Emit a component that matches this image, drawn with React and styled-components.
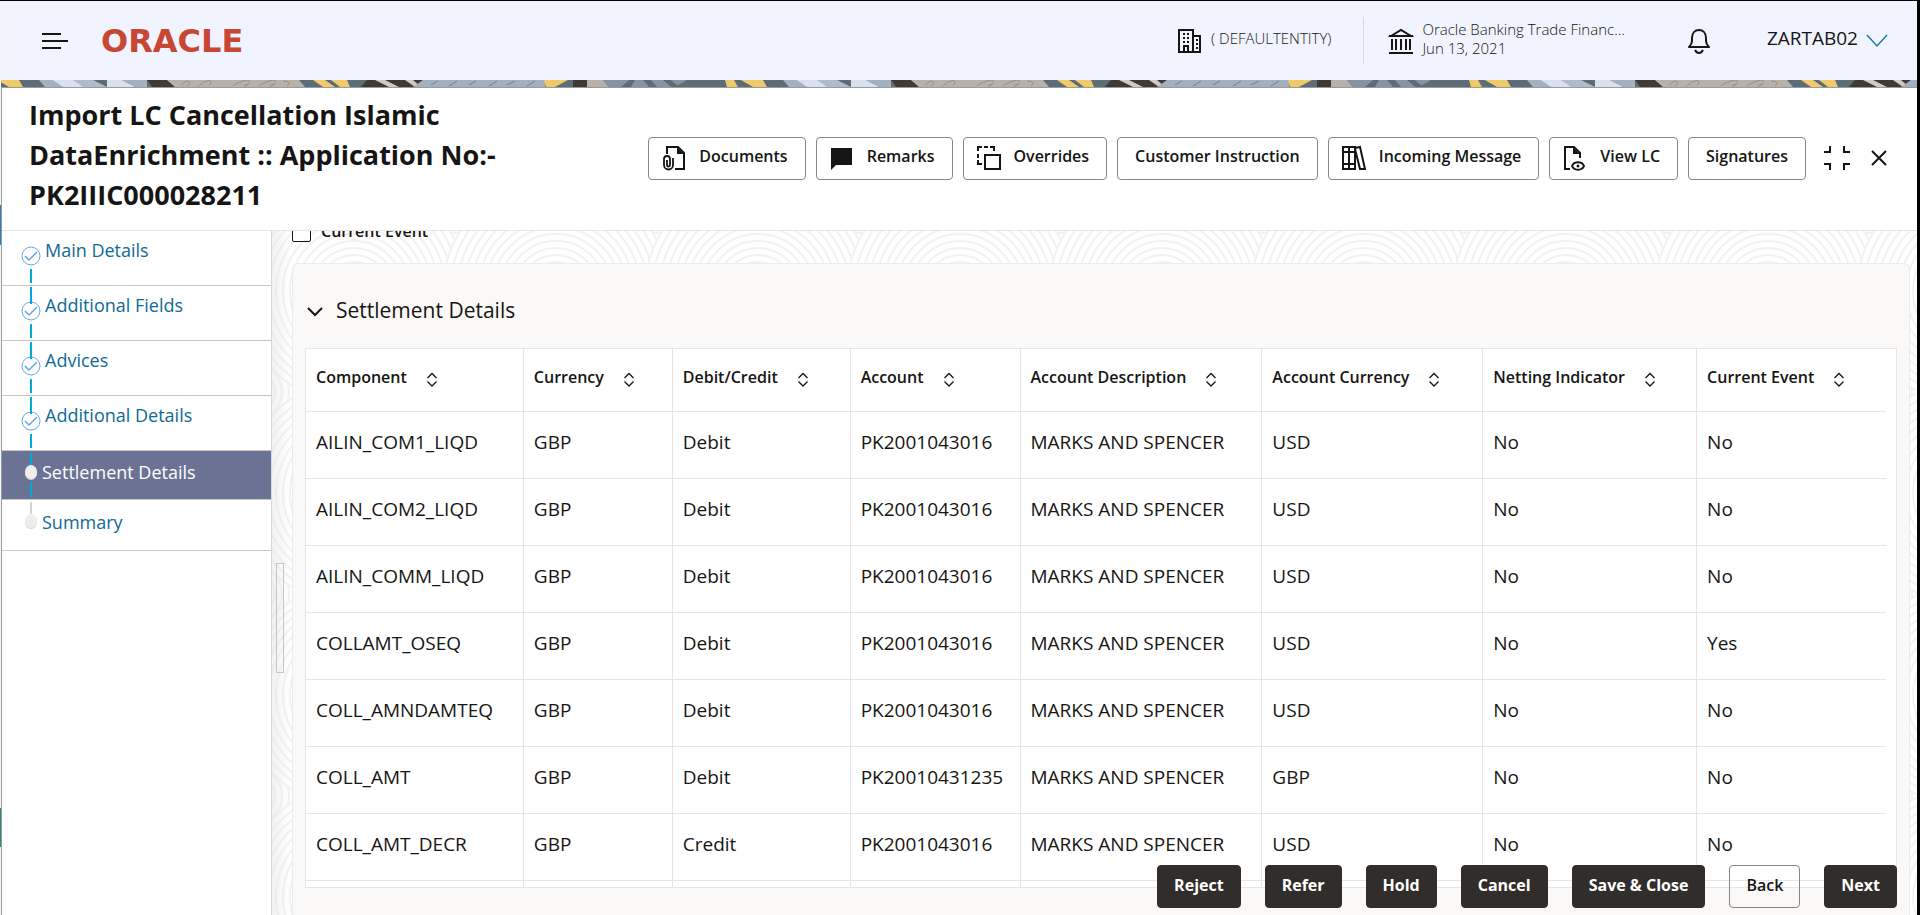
import styled, { createGlobalStyle } from "styled-components"

const GlobalStyle = createGlobalStyle`
    :root {
        --text-color: #161513;
        --link-color: #0f6a94;
        --line-color: #e5e5e5;
        --topbar-color: #f1f4fe;
        --active-color: #6b7394;
        --dark-button-color: #312d2a;
        --small-font-size: 15px;
        --button-font-size: 16px;
        --menu-font-size: 18px;
        --body-font-size: 19px;
    }

    * {
        box-sizing: border-box;
    }

    body {
        margin: 0;
        color: var(--text-color);
        font-family: "Open Sans", "Noto Sans", sans-serif;
        font-size: var(--body-font-size);
    }

    button, input {
        font-family: inherit;
        color: inherit;
    }

    svg {
        display: block;
        flex: none;
    }
`

const ringRadii = [113, 106, 99, 92, 85, 78, 71, 64, 57, 50, 43, 36, 29, 22, 15, 8]

/* the later rings cover the earlier ones */
const ringCenters = [
    [101, 101], [-101, 101], [303, 101], [101, -101], [101, 303],
    [0, 0], [202, 0], [0, 202], [202, 202],
]

const ringsAt = (x, y) => ringRadii.map((r) => `<circle cx="${x}" cy="${y}" r="${r}"/>`).join("")

const ringTile = `<svg xmlns="http://www.w3.org/2000/svg" width="202" height="202"><g fill="#fff" stroke="#f2f2f2" stroke-width="2">${
    ringCenters.map(([x, y]) => ringsAt(x, y)).join("")
}</g></svg>`

const Window = styled.div`
    display: flex;
    flex-direction: column;
    height: 100vh;
    overflow: hidden;
    padding-left: 1px;
    border-top: 1px solid #000;
    border-right: 3px solid #000;
    background: linear-gradient(#f4f6f8 204px, #2f7fb8 204px, #2f7fb8 244px, #f4f6f8 244px, #f4f6f8 807px, #2c8a80 807px, #2c8a80 846px, #f4f6f8 846px);
`

const TopBar = styled.header`
    display: flex;
    align-items: center;
    height: 79px;
    padding: 0 29px 0 40px;
    background: var(--topbar-color);
    font-size: var(--small-font-size);
    font-weight: 300;
`

const IconButton = styled.button`
    display: flex;
    align-items: center;
    padding: 0;
    border: none;
    background: transparent;
    cursor: pointer;
`

const Logo = styled.a`
    margin: 0 auto 0 32px;
    color: #c74634;
    font-family: "DejaVu Sans", sans-serif;
    font-size: 32px;
    font-weight: 700;
    line-height: 32px;
    text-decoration: none;
`

const BarText = styled.div`
    padding-bottom: 4px;
    line-height: 19px;
`

const Entity = styled.div`
    display: flex;
    align-items: center;
    gap: 8px;
    height: 47px;
    padding-right: 32px;
    border-right: 1px solid #d5d9e4;
`

const Branch = styled.div`
    display: flex;
    align-items: center;
    gap: 8px;
    padding-left: 24px;
    margin-right: 62px;
`

const UserMenu = styled(IconButton)`
    gap: 8px;
    margin-left: 56px;
    font-size: var(--body-font-size);
`

const Page = styled.div`
    flex: 1;
    display: flex;
    flex-direction: column;
    min-height: 0;
    border-left: 1px solid #9a9a9a;
    background: #fff;
`

const TitleBar = styled.div`
    display: flex;
    align-items: center;
    justify-content: space-between;
    gap: 20px;
    padding: 7px 30px 15px 27px;
    border-top: 1px solid #9a9a9a;
    border-bottom: 1px solid var(--line-color);
`

const Title = styled.h1`
    flex: 0 1 500px;
    margin: 0;
    font-size: 27px;
    font-weight: 700;
    line-height: 40px;
`

const Toolbar = styled.div`
    display: flex;
    align-items: center;
    gap: 10px;
    padding-top: 6px;
`

const ToolButton = styled.button`
    display: flex;
    align-items: center;
    gap: ${(props) => (props.$tight ? 12 : 14)}px;
    height: 43px;
    padding: 0 17px 0 ${(props) => (props.$icon ? 12 : 17)}px;
    border: 1px solid #8b8580;
    border-radius: 4px;
    background: transparent;
    font-size: var(--button-font-size);
    font-weight: 600;
    line-height: 22px;
    white-space: nowrap;
    cursor: pointer;

    span {
        padding-bottom: 4px;
    }
`

const WindowButtons = styled.div`
    display: flex;
    align-items: center;
    gap: 20px;
    padding-left: 7px;
`

const Body = styled.div`
    flex: 1;
    display: flex;
    min-height: 0;
`

const Steps = styled.nav`
    flex: none;
    width: 270px;
    border-right: 1px solid #d3dae3;
`

const stepHeights = { done: 55, active: 49, next: 51 }
const stepLines = { done: 38, active: 42, next: 44 }

const Step = styled.a`
    display: flex;
    height: ${(props) => stepHeights[props.$state]}px;
    padding-left: 18px;
    gap: ${(props) => (props.$state === "done" ? 3 : 0)}px;
    border-bottom: 1px solid #c9c7c3;
    background: ${(props) => (props.$state === "active" ? "var(--active-color)" : "transparent")};
    color: ${(props) => (props.$state === "active" ? "#fff" : "var(--link-color)")};
    font-size: var(--menu-font-size);
    line-height: ${(props) => stepLines[props.$state]}px;
    text-decoration: none;
`

const Main = styled.main`
    flex: 1;
    display: flex;
    min-width: 0;
    overflow: hidden;
    background: linear-gradient(to right, rgba(225, 228, 232, 0.5), transparent 18px),
        url("data:image/svg+xml,${encodeURIComponent(ringTile)}") 82px 60px;
`

const Gutter = styled.div`
    flex: none;
    width: 20px;
    padding: 332px 0 0 4px;
`

const Splitter = styled.div`
    width: 8px;
    height: 110px;
    border: 1px solid #c6c6c6;
`

/* scrolled a little, so that the checkbox row runs under the title bar */
const Content = styled.div`
    flex: 1;
    display: flex;
    flex-direction: column;
    min-width: 0;
    margin: -16px 7px 0 0;
`

const CheckLabel = styled.label`
    flex: none;
    display: flex;
    align-items: center;
    gap: 10px;
    height: 34px;
    margin-bottom: 14px;
    font-size: var(--button-font-size);
    font-weight: 600;
    line-height: 20px;

    span {
        padding-bottom: 2px;
    }
`

const Checkbox = styled.input`
    appearance: none;
    width: 19px;
    height: 19px;
    margin: 0;
    border: 1px solid var(--text-color);
    border-radius: 2px;
    background: #fff;
`

const Card = styled.section`
    flex: 1;
    padding: 0 12px;
    border: 1px solid #eeecea;
    border-bottom: none;
    border-radius: 6px 6px 0 0;
    background: #faf9f7;
`

const CardTitle = styled.h2`
    margin: 0;
    padding: 32px 0 24px;
    font-size: 21px;
    font-weight: 500;
    line-height: 28px;

    button {
        gap: 11px;
        font-size: inherit;
        font-weight: inherit;
        line-height: inherit;
    }
`

const TableBox = styled.div`
    padding-right: 10px;
    border: 1px solid var(--line-color);
    background: #fff;
`

const Table = styled.table`
    width: 100%;
    table-layout: fixed;
    border-collapse: separate;
    border-spacing: 0;
`

const HeadCell = styled.th`
    height: 63px;
    padding: 0 0 2px 10px;
    border-bottom: 1px solid var(--line-color);
    border-right: 1px solid var(--line-color);
    font-size: var(--button-font-size);
    font-weight: 600;
    line-height: 22px;
    text-align: left;
    white-space: nowrap;

    &:last-child {
        border-right: none;
    }
`

const SortButton = styled(IconButton)`
    gap: 18px;
    font-size: inherit;
    font-weight: inherit;
    line-height: inherit;

    span {
        padding-bottom: 4px;
    }
`

const Cell = styled.td`
    height: ${(props) => (props.$peek ? 6 : 67)}px;
    padding: 0 0 ${(props) => (props.$peek ? 0 : 6)}px 10px;
    border-bottom: ${(props) => (props.$peek ? "none" : "1px solid var(--line-color)")};
    border-right: 1px solid var(--line-color);
    line-height: 24px;
    white-space: nowrap;

    &:last-child {
        border-right: none;
    }
`

const ActionBar = styled.footer`
    position: absolute;
    right: 23px;
    bottom: 7px;
    display: flex;
    gap: 24px;
`

const ActionButton = styled.button`
    height: 43px;
    padding: 0 16px 4px;
    border: 1px solid ${(props) => (props.$outlined ? "#8b8580" : "var(--dark-button-color)")};
    border-radius: 4px;
    background: ${(props) => (props.$outlined ? "transparent" : "var(--dark-button-color)")};
    color: ${(props) => (props.$outlined ? "var(--text-color)" : "#fff")};
    font-size: var(--button-font-size);
    font-weight: ${(props) => (props.$outlined ? 600 : 700)};
    line-height: 22px;
    cursor: pointer;
`

const MenuIcon = () => (
    <svg width="28" height="20" viewBox="0 0 28 20" stroke="#161513" strokeWidth="2">
        <path d="M1 3h19M1 10h26M1 17h19" />
    </svg>
)

const BuildingIcon = () => (
    <svg width="26" height="26" viewBox="0 0 26 26" fill="none" stroke="#161513" strokeWidth="2">
        <path d="M2 2h14v22H2zM16 8h7v16h-7M7 24v-6h4v6" />
        <path d="M6 6h2M10 6h2M6 10h2M10 10h2M6 14h2M10 14h2M19 12h2M19 16h2M19 20h2" />
    </svg>
)

const BankIcon = () => (
    <svg width="26" height="28" viewBox="0 0 26 28" fill="none" stroke="#161513" strokeWidth="2">
        <path d="M3 9L13 3l10 6z" />
        <path d="M1 9h24M4 12v11M8 12v11M13 12v11M18 12v11M22 12v11M1 26h24" />
    </svg>
)

const BellIcon = () => (
    <svg width="24" height="26" viewBox="0 0 24 26" fill="none" stroke="#161513" strokeWidth="2">
        <path d="M2 19c2-2 3-3 3-6v-3c0-5 3-8 7-8s7 3 7 8v3c0 3 1 4 3 6z" strokeLinejoin="round" />
        <path d="M8 22c1 2 2 3 4 3s3-1 4-3" />
    </svg>
)

const UserChevron = () => (
    <svg width="22" height="14" viewBox="0 0 22 14" fill="none" stroke="#1c7aa8" strokeWidth="1.5">
        <path d="M1 1l10 11L21 1" />
    </svg>
)

const DocumentsIcon = () => (
    <svg width="24" height="26" viewBox="0 0 24 26" fill="none" stroke="#161513" strokeWidth="2">
        <path d="M6 9V2h11l6 6v16h-9" />
        <path d="M16 2v7h7z" fill="#161513" stroke="none" />
        <path d="M12 13v7a4.500 4.500 0 0 1-9 0v-6a3 3 0 0 1 6 0v6a1.500 1.500 0 0 1-3 0v-5" strokeWidth="1.800" />
    </svg>
)

const RemarksIcon = () => (
    <svg width="24" height="26" viewBox="0 0 24 26" fill="#161513">
        <path d="M2 3h21v17H7l-5 5z" />
    </svg>
)

const OverridesIcon = () => (
    <svg width="26" height="26" viewBox="0 0 26 26" fill="none" stroke="#161513" strokeWidth="2">
        <path d="M9 10h15v14H9z" />
        <path d="M2 6V2h4M8 2h4M14 2h4v4M2 9v4M2 15v4h4" />
    </svg>
)

const BooksIcon = () => (
    <svg width="26" height="26" viewBox="0 0 26 26" fill="none" stroke="#161513" strokeWidth="2">
        <path d="M2 2h6v22H2zM8 2h6v22H8zM2 7h12M2 19h12" />
        <path d="M14 3l5-1 5 22h-5L14 4" />
    </svg>
)

const ViewDocIcon = () => (
    <svg width="24" height="26" viewBox="0 0 24 26" fill="none" stroke="#161513" strokeWidth="2">
        <path d="M8 24H3V2h9l6 6v5" />
        <path d="M11 2v7h7z" fill="#161513" stroke="none" />
        <path d="M10 21c2-5 10-5 12 0-2 5-10 5-12 0z" />
        <circle cx="16" cy="21" r="1.500" fill="#161513" stroke="none" />
    </svg>
)

const CollapseIcon = () => (
    <svg width="28" height="28" viewBox="0 0 28 28" fill="none" stroke="#161513" strokeWidth="2">
        <path d="M1 8h6V2M27 8h-6V2M1 20h6v6M27 20h-6v6" />
    </svg>
)

const CloseIcon = () => (
    <svg width="16" height="16" viewBox="0 0 16 16" fill="none" stroke="#161513" strokeWidth="2">
        <path d="M1 1l14 14M15 1L1 15" />
    </svg>
)

const CardChevron = () => (
    <svg width="20" height="20" viewBox="0 0 20 20" fill="none" stroke="#161513" strokeWidth="2">
        <path d="M3 8l7 7 7-7" />
    </svg>
)

const SortIcon = () => (
    <svg width="14" height="18" viewBox="0 0 14 18" fill="none" stroke="#161513" strokeWidth="1.300">
        <path d="M2.500 8L7 3.500 11.500 8M2.500 11.500L7 16l4.500-4.500" />
    </svg>
)

const StepMark = ({ state, first }) => {
    if (state === "done") {
        return (
            <svg width="22" height="54" viewBox="0 0 22 54" fill="none">
                <circle cx="11" cy="25" r="9" stroke="#6aa5e3" />
                <path d="M5 25l4 4 8-8" stroke="#6aa5e3" strokeWidth="1.500" />
                {!first && <path d="M11 1v17" stroke="#00abdb" strokeWidth="2" />}
                <path d="M11 38v14" stroke="#00abdb" strokeWidth="2" />
            </svg>
        )
    }

    return (
        <svg width="22" height="48" viewBox="0 0 22 48" fill="none">
            <path d="M11 2v12" stroke={state === "active" ? "#00abdb" : "#d4d4d4"} strokeWidth="2" />
            {state === "active" && <path d="M11 31v15" stroke="#00abdb" strokeWidth="2" />}
            <ellipse cx="11" cy="22" rx="6" ry="7" fill="#d8d7d5" />
            <ellipse cx="11" cy="21" rx="6" ry="7" fill="#efeeec" />
        </svg>
    )
}

/* woven band under the top bar, repeats every 744px */
const Band = () => (
    <svg width="100%" height="7">
        <defs>
            <pattern id="band" x="146" width="744" height="7" patternUnits="userSpaceOnUse">
                <rect width="744" height="7" fill="#5c6d78" />
                <path d="M0 0h20l8 7H5z" fill="#403a36" />
                <path d="M20 0h132l6 7H28z" fill="#b8b0aa" />
                <path d="M34 5c6-6 12-4 6 1M52 6c8-8 16-6 10-1M86 6c8-6 20-8 16-3s-8 3 0 1M112 6c8-6 20-8 16-3s-8 3 0 1M136 1c6 0 8 2 4 5" fill="none" stroke="#948c86" />
                <path d="M166 0h12l10 7h-12zM184 0h16l3 7h-10z" fill="#efc96a" />
                <path d="M220 0h56l-8 7h-54z" fill="#403a36" />
                <path d="M228 0h10l14 7h-10zM258 0h8l8 7h-6z" fill="#cfcac5" />
                <path d="M276 0h122v7H266z" fill="#a3b0c2" />
                <path d="M284 5l7-4M302 6l8-5M322 5l7-4M342 6l8-5M360 5l8-4M380 6l8-5" stroke="#71808f" />
                <path d="M397 0h24l-13 7h-9z" fill="#efc96a" />
                <path d="M426 0h14v7h-14z" fill="#403a36" />
                <path d="M440 0h16l6 7h-22z" fill="#b8b0aa" />
                <path d="M456 0h84l-12 7h-66z" fill="#8593a5" />
                <path d="M474 7l8-7h6l-4 7zM496 0h8l6 7h-8zM516 0h8l8 7h-8z" fill="#5c6d78" />
                <path d="M578 0h9l4 7h-11zM594 0h22l4 7h-14z" fill="#efc96a" />
                <path d="M636 0h16l10 7h-20z" fill="#a3b0c2" />
                <path d="M650 0h20l14 7h-24z" fill="#d9e1f1" />
                <path d="M670 0h20l14 7h-24z" fill="#b0bccd" />
                <path d="M704 0h18l10 7h-28z" fill="#d9e1f1" />
                <path d="M718 0h26v7h-12z" fill="#a3b0c2" />
            </pattern>
        </defs>
        <rect width="100%" height="7" fill="url(#band)" />
    </svg>
)

const tools = [
    { label: "Documents", icon: <DocumentsIcon /> },
    { label: "Remarks", icon: <RemarksIcon /> },
    { label: "Overrides", icon: <OverridesIcon />, tight: true },
    { label: "Customer Instruction" },
    { label: "Incoming Message", icon: <BooksIcon />, tight: true },
    { label: "View LC", icon: <ViewDocIcon /> },
    { label: "Signatures" },
]

const steps = [
    { label: "Main Details", state: "done" },
    { label: "Additional Fields", state: "done" },
    { label: "Advices", state: "done" },
    { label: "Additional Details", state: "done" },
    { label: "Settlement Details", state: "active" },
    { label: "Summary", state: "next" },
]

const columns = [
    { label: "Component", width: 218 },
    { label: "Currency", width: 149 },
    { label: "Debit/Credit", width: 178 },
    { label: "Account", width: 170 },
    { label: "Account Description", width: 242 },
    { label: "Account Currency", width: 221 },
    { label: "Netting Indicator", width: 214 },
    { label: "Current Event", width: 189 },
]

const tableWidth = columns.reduce((sum, column) => sum + column.width, 0)

const rows = [
    ["AILIN_COM1_LIQD", "GBP", "Debit", "PK2001043016", "MARKS AND SPENCER", "USD", "No", "No"],
    ["AILIN_COM2_LIQD", "GBP", "Debit", "PK2001043016", "MARKS AND SPENCER", "USD", "No", "No"],
    ["AILIN_COMM_LIQD", "GBP", "Debit", "PK2001043016", "MARKS AND SPENCER", "USD", "No", "No"],
    ["COLLAMT_OSEQ", "GBP", "Debit", "PK2001043016", "MARKS AND SPENCER", "USD", "No", "Yes"],
    ["COLL_AMNDAMTEQ", "GBP", "Debit", "PK2001043016", "MARKS AND SPENCER", "USD", "No", "No"],
    ["COLL_AMT", "GBP", "Debit", "PK20010431235", "MARKS AND SPENCER", "GBP", "No", "No"],
    ["COLL_AMT_DECR", "GBP", "Credit", "PK2001043016", "MARKS AND SPENCER", "USD", "No", "No"],
]

const actions = ["Reject", "Refer", "Hold", "Cancel", "Save & Close", "Back", "Next"]

const Header = () => (
    <TopBar>
        <IconButton aria-label="Menu"><MenuIcon /></IconButton>
        <Logo href="#">ORACLE</Logo>
        <Entity>
            <BuildingIcon />
            <BarText>( DEFAULTENTITY)</BarText>
        </Entity>
        <Branch>
            <BankIcon />
            <BarText>
                <div>Oracle Banking Trade Financ…</div>
                <div>Jun 13, 2021</div>
            </BarText>
        </Branch>
        <IconButton aria-label="Notifications"><BellIcon /></IconButton>
        <UserMenu>
            <BarText>ZARTAB02</BarText>
            <UserChevron />
        </UserMenu>
    </TopBar>
)

const SettlementTable = () => (
    <TableBox>
        <Table>
            <colgroup>
                {columns.map((column) => (
                    <col key={column.label} style={{ width: `${(column.width / tableWidth) * 100}%` }} />
                ))}
            </colgroup>
            <thead>
                <tr>
                    {columns.map((column) => (
                        <HeadCell key={column.label}>
                            <SortButton>
                                <span>{column.label}</span>
                                <SortIcon />
                            </SortButton>
                        </HeadCell>
                    ))}
                </tr>
            </thead>
            <tbody>
                {rows.map((row) => (
                    <tr key={row[0]}>
                        {row.map((value, i) => <Cell key={columns[i].label}>{value}</Cell>)}
                    </tr>
                ))}
                <tr>
                    {columns.map((column) => <Cell key={column.label} $peek />)}
                </tr>
            </tbody>
        </Table>
    </TableBox>
)

export default function App() {
    return (
        <Window>
            <GlobalStyle />
            <Header />
            <Band />
            <Page>
                <TitleBar>
                    <Title>Import LC Cancellation Islamic DataEnrichment :: Application No:- PK2IIIC000028211</Title>
                    <Toolbar>
                        {tools.map((tool) => (
                            <ToolButton key={tool.label} $icon={Boolean(tool.icon)} $tight={tool.tight}>
                                {tool.icon}
                                <span>{tool.label}</span>
                            </ToolButton>
                        ))}
                        <WindowButtons>
                            <IconButton aria-label="Collapse"><CollapseIcon /></IconButton>
                            <IconButton aria-label="Close"><CloseIcon /></IconButton>
                        </WindowButtons>
                    </Toolbar>
                </TitleBar>
                <Body>
                    <Steps>
                        {steps.map((step, i) => (
                            <Step key={step.label} href="#" $state={step.state}>
                                <StepMark state={step.state} first={i === 0} />
                                {step.label}
                            </Step>
                        ))}
                    </Steps>
                    <Main>
                        <Gutter>
                            <Splitter />
                        </Gutter>
                        <Content>
                            <CheckLabel>
                                <Checkbox type="checkbox" />
                                <span>Current Event</span>
                            </CheckLabel>
                            <Card>
                                <CardTitle>
                                    <IconButton>
                                        <CardChevron />
                                        Settlement Details
                                    </IconButton>
                                </CardTitle>
                                <SettlementTable />
                            </Card>
                        </Content>
                    </Main>
                </Body>
            </Page>
            <ActionBar>
                {actions.map((action) => (
                    <ActionButton key={action} $outlined={action === "Back"}>{action}</ActionButton>
                ))}
            </ActionBar>
        </Window>
    )
}
